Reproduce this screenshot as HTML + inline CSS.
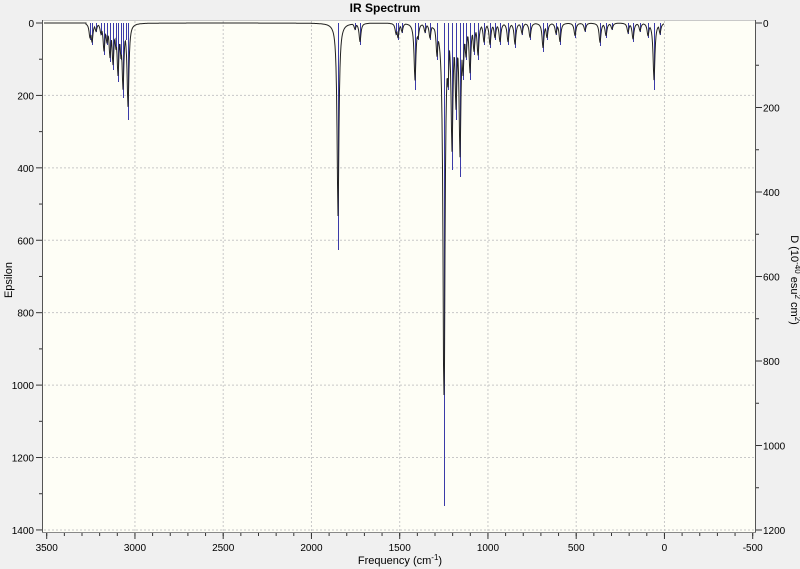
<!DOCTYPE html>
<html><head><meta charset="utf-8"><style>
html,body{margin:0;padding:0;background:#f0f0f0;}
svg{display:block;font-family:"Liberation Sans",sans-serif;}
</style></head><body>
<svg id="s" width="800" height="569" viewBox="0 0 800 569">
<rect width="800" height="569" fill="#f0f0f0"/>
<text x="385" y="12" font-size="12" font-weight="bold" text-anchor="middle">IR Spectrum</text>
<rect x="43" y="20" width="712" height="512" fill="#fefef6"/>
<line x1="43" y1="20.5" x2="755" y2="20.5" stroke="#c8c8c8"/>
<g id="grid" stroke="#c8c8c8" stroke-dasharray="2,2" stroke-width="1"></g>
<g id="spec"></g>
<line x1="42.5" y1="20" x2="42.5" y2="533" stroke="#555"/>
<line x1="755.5" y1="20" x2="755.5" y2="533" stroke="#555"/>
<line x1="42" y1="532.5" x2="756" y2="532.5" stroke="#888"/>
<g id="ax" font-size="10" fill="#000"></g>
<text transform="translate(12,280) rotate(-90)" font-size="11" text-anchor="middle">Epsilon</text>
<text transform="translate(791,280) rotate(90)" font-size="11" text-anchor="middle">D (10<tspan dy="-4" font-size="8">-40</tspan><tspan dy="4"> esu</tspan><tspan dy="-4" font-size="8">2</tspan><tspan dy="4"> cm</tspan><tspan dy="-4" font-size="8">2</tspan><tspan dy="4">)</tspan></text>
<text x="400" y="564" font-size="11" text-anchor="middle">Frequency (cm<tspan dy="-4" font-size="8">-1</tspan><tspan dy="4">)</tspan></text>
</svg>
<script>
var NS="http://www.w3.org/2000/svg";
function el(p,t,a,txt){var e=document.createElementNS(NS,t);for(var k in a)e.setAttribute(k,a[k]);if(txt!=null)e.textContent=txt;p.appendChild(e);return e;}
var grid=document.getElementById('grid'),ax=document.getElementById('ax'),spec=document.getElementById('spec');
function fx(f){return 46.7+(3500-f)*0.17650;}
function ly(v){return 23+v*0.3621;}
function ry(v){return 23+v*0.4225;}
for(var f=3500;f>=-500;f-=500){var x=fx(f);
 if(f<3500&&f>-500)el(grid,'line',{x1:x,y1:21,x2:x,y2:531});
 el(ax,'text',{x:x,y:551,'text-anchor':'middle'},String(f));
 el(ax,'line',{x1:x,y1:533,x2:x,y2:539,stroke:'#333'});
}
for(var f=3500;f>=-500;f-=100){var x=fx(f);el(ax,'line',{x1:x,y1:533,x2:x,y2:536,stroke:'#333'});}
for(var v=0;v<=1400;v+=200){var y=ly(v);
 if(v>0&&v<1400)el(grid,'line',{x1:44,y1:y,x2:754,y2:y});
 el(ax,'text',{x:34,y:y+4,'text-anchor':'end'},String(v));
 el(ax,'line',{x1:36,y1:y,x2:42,y2:y,stroke:'#333'});
 if(v<1400)el(ax,'line',{x1:39,y1:ly(v+100),x2:42,y2:ly(v+100),stroke:'#333'});
}
el(grid,'line',{x1:44,y1:530,x2:754,y2:530});
for(var v=0;v<=1200;v+=200){var y=ry(v);
 el(ax,'text',{x:763,y:y+4},String(v));
 el(ax,'line',{x1:756,y1:y,x2:762,y2:y,stroke:'#333'});
 if(v<1200)el(ax,'line',{x1:756,y1:ry(v+100),x2:759,y2:ry(v+100),stroke:'#333'});
}
var P=[[90,40],[92,45],[96,32],[101,35],[104,55],[107,45],[110,62],[113,70],[116,50],[118,82],[121,60],[123,98],[126,40],[128,120],
[338,250],[355,30],[360,45],[396,35],[398,40],[402,33],[415,90],[418,40],[425,33],[430,40],[437,60],[444,506],[448,90],[452,170],[456,120],[460,177],[463,80],[466,60],[470,80],[474,55],[478,60],[484,45],[490,48],[495,40],[500,45],[508,45],[515,48],[522,35],[530,40],[543,52],[547,40],[556,35],[560,45],[575,38],[585,32],[600,46],[606,38],[612,30],[628,34],[633,42],[640,32],[648,38],[654,90],[660,35]];
var w=1.1,d="";
for(var x=86;x<=664;x+=0.5){var m=0,s=0;for(var i=0;i<P.length;i++){var h=P[i][1]-23,dx=(x-P[i][0])/w;var v=h/(1+dx*dx);s+=v;if(v>m)m=v;}
 var val=m*0.85+(s-m)*0.15; if(Math.abs(x-444)<3)val=Math.min(val,372);
 var y=23+val;d+=(d?"L":"M")+x.toFixed(1)+" "+y.toFixed(1);}
for(var i=0;i<P.length;i++){var x=P[i][0]+0.5;el(spec,'line',{x1:x,y1:23,x2:x,y2:P[i][1],stroke:'#3b3ba8','stroke-width':1});}
el(spec,'path',{d:"M44 23L86 23"+d.replace(/^M/,"L"),fill:'none',stroke:'#222','stroke-width':1});
</script>
</body></html>
